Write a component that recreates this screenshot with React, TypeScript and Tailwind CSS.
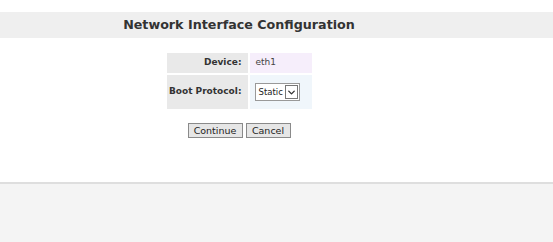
import { ChevronDown } from "lucide-react";

const App = () => {
  return (
    <div className="w-[553px] h-[242px] flex flex-col bg-white font-['DejaVu_Sans',Verdana,sans-serif] text-[#333]">
      <div className="h-[12px]" />
      <div className="h-[26px] bg-[#efefef] flex items-center">
        <div className="w-[478px] flex justify-center">
          <h1 className="text-[12.7px] font-bold text-[#333] leading-none">Network Interface Configuration</h1>
        </div>
      </div>
      <div className="h-[144px] w-[478px] flex flex-col items-center pt-[15px]">
        <div className="grid grid-cols-[81px_62px] gap-[2px] text-[9px] whitespace-nowrap">
          <div className="h-[20px] bg-[#e9e9e9] flex items-center justify-end pr-[6px] font-bold">Device:</div>
          <div className="h-[20px] bg-[#f6eefb] flex items-center pl-[6px] text-[#444]">eth1</div>
          <div className="h-[34px] bg-[#e9e9e9] flex items-center justify-end pr-[6px] font-bold">Boot Protocol:</div>
          <div className="h-[34px] bg-[#f0f6fb] flex items-center pl-[5px]">
            <div className="h-[18px] w-[45px] border border-[#999] bg-white flex items-center justify-between pl-[3px] pr-[1px] text-[8.5px]">
              <span className="text-[#222]">Static</span>
              <span className="h-[14px] w-[13px] border border-[#777] flex items-center justify-center bg-white">
                <ChevronDown size={11} strokeWidth={3} className="text-[#333]" />
              </span>
            </div>
          </div>
        </div>
        <div className="flex gap-[3px] mt-[14px] text-[9.5px]">
          <button className="h-[15px] w-[55px] border border-[#8a8a8a] bg-[#e6e6e6] leading-none text-[#222]">Continue</button>
          <button className="h-[15px] w-[45px] border border-[#8a8a8a] bg-[#e6e6e6] leading-none text-[#222]">Cancel</button>
        </div>
      </div>
      <div className="flex-1 border-t-[2px] border-[#dedede] bg-[#f4f4f4]" />
    </div>
  );
};

export default App;
